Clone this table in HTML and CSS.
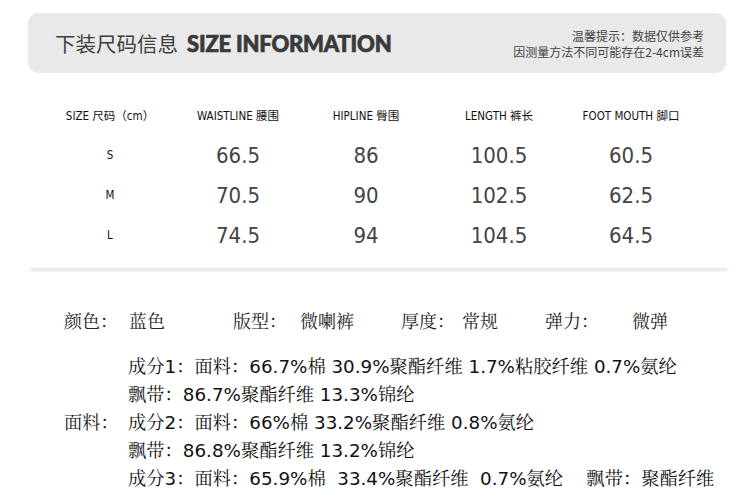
FILE: index.html
```html
<!DOCTYPE html>
<html lang="zh-CN">
<head>
<meta charset="utf-8">
<title>SIZE INFORMATION</title>
<link rel="stylesheet" href="styles.css">
</head>
<body>
<div class="page">
  <div class="banner">
    <div class="banner-title">
      <span class="cn-title">下装尺码信息</span>
      <span class="en-title">SIZE INFORMATION</span>
    </div>
    <div class="banner-note">
      <div>温馨提示：数据仅供参考</div>
      <div>因测量方法不同可能存在2-4cm误差</div>
    </div>
  </div>

  <div class="size-table">
    <div class="cell head">SIZE 尺码（cm）</div>
    <div class="cell head">WAISTLINE 腰围</div>
    <div class="cell head">HIPLINE 臀围</div>
    <div class="cell head">LENGTH 裤长</div>
    <div class="cell head">FOOT MOUTH 脚口</div>

    <div class="cell size">S</div>
    <div class="cell val">66.5</div>
    <div class="cell val">86</div>
    <div class="cell val">100.5</div>
    <div class="cell val">60.5</div>

    <div class="cell size">M</div>
    <div class="cell val">70.5</div>
    <div class="cell val">90</div>
    <div class="cell val">102.5</div>
    <div class="cell val">62.5</div>

    <div class="cell size">L</div>
    <div class="cell val">74.5</div>
    <div class="cell val">94</div>
    <div class="cell val">104.5</div>
    <div class="cell val">64.5</div>
  </div>

  <div class="divider"></div>

  <div class="attrs">
    <span>颜色：</span><span>蓝色</span>
    <span>版型：</span><span>微喇裤</span>
    <span>厚度：</span><span>常规</span>
    <span>弹力：</span><span>微弹</span>
  </div>

  <div class="fabric">
    <div class="fabric-label">面料：</div>
    <div class="fabric-lines">
      <div>成分1：面料：66.7%棉 30.9%聚酯纤维 1.7%粘胶纤维 0.7%氨纶</div>
      <div>飘带：86.7%聚酯纤维 13.3%锦纶</div>
      <div>成分2：面料：66%棉 33.2%聚酯纤维 0.8%氨纶</div>
      <div>飘带：86.8%聚酯纤维 13.2%锦纶</div>
      <div>成分3：面料：65.9%棉  33.4%聚酯纤维  0.7%氨纶    飘带：聚酯纤维</div>
    </div>
  </div>
</div>
</body>
</html>
```
FILE: styles.css
```css
* { box-sizing: border-box; }
html, body { margin: 0; padding: 0; background: #fff; }
.page {
  width: 750px;
  height: 499px;
  overflow: hidden;
  padding-top: 13px;
  font-family: "DejaVu Sans", "Noto Sans CJK SC", sans-serif;
}
.banner {
  margin: 0 24px 0 28px;
  height: 60px;
  background: #e9e9e9;
  border-radius: 10px;
  display: flex;
  align-items: center;
  justify-content: space-between;
  padding: 0 22px 0 27px;
  color: #3c3c3c;
}
.banner-title { display: flex; align-items: center; }
.cn-title {
  font-family: "Noto Sans CJK SC", sans-serif;
  font-size: 20.5px;
  font-weight: 400;
  color: #3e3e3e;
}
.en-title {
  margin-left: 9px;
  font-family: Lato, Roboto, sans-serif;
  font-weight: 900;
  font-size: 22px;
  letter-spacing: -0.2px;
  color: #3a3a3a;
  -webkit-text-stroke: 0.7px #3a3a3a;
}
.banner-note {
  text-align: right;
  font-family: "Noto Sans CJK SC", sans-serif;
  font-size: 12px;
  line-height: 16px;
  color: #444;
  padding-top: 2px;
}
.size-table {
  margin: 22px 0 0 46px;
  display: grid;
  grid-template-columns: 128px 128px 128px 138px 126px;
  grid-auto-rows: 40px;
}
.cell {
  display: flex;
  align-items: center;
  justify-content: center;
}
.head {
  font-family: "DejaVu Sans Condensed", "Noto Sans CJK SC", sans-serif;
  font-size: 11.5px;
  color: #111;
}
.size {
  font-family: "DejaVu Sans Condensed", sans-serif;
  font-size: 11.5px;
  color: #111;
}
.val {
  font-family: "DejaVu Sans Condensed", sans-serif;
  font-size: 22px;
  color: #444;
}
.divider {
  margin: 13px 22px 0 30px;
  height: 3px;
  background: #e6e6e6;
  border-radius: 2px;
  filter: blur(1px);
}
.attrs {
  margin: 37px 0 0 64px;
  display: grid;
  grid-template-columns: 65px 104px 67px 101px 61px 83px 87px auto;
  font-family: "DejaVu Sans", "Noto Serif CJK SC", "Noto Sans CJK SC", serif;
  font-size: 18px;
  line-height: 28px;
  color: #222;
}
.fabric {
  margin: 17px 0 0 64px;
  display: flex;
  align-items: center;
  font-family: "DejaVu Sans", "Noto Serif CJK SC", "Noto Sans CJK SC", serif;
  font-size: 18.3px;
  line-height: 28px;
  color: #111;
}
.fabric-label { width: 64px; color: #222; }
.fabric-lines div { white-space: pre; }
```
